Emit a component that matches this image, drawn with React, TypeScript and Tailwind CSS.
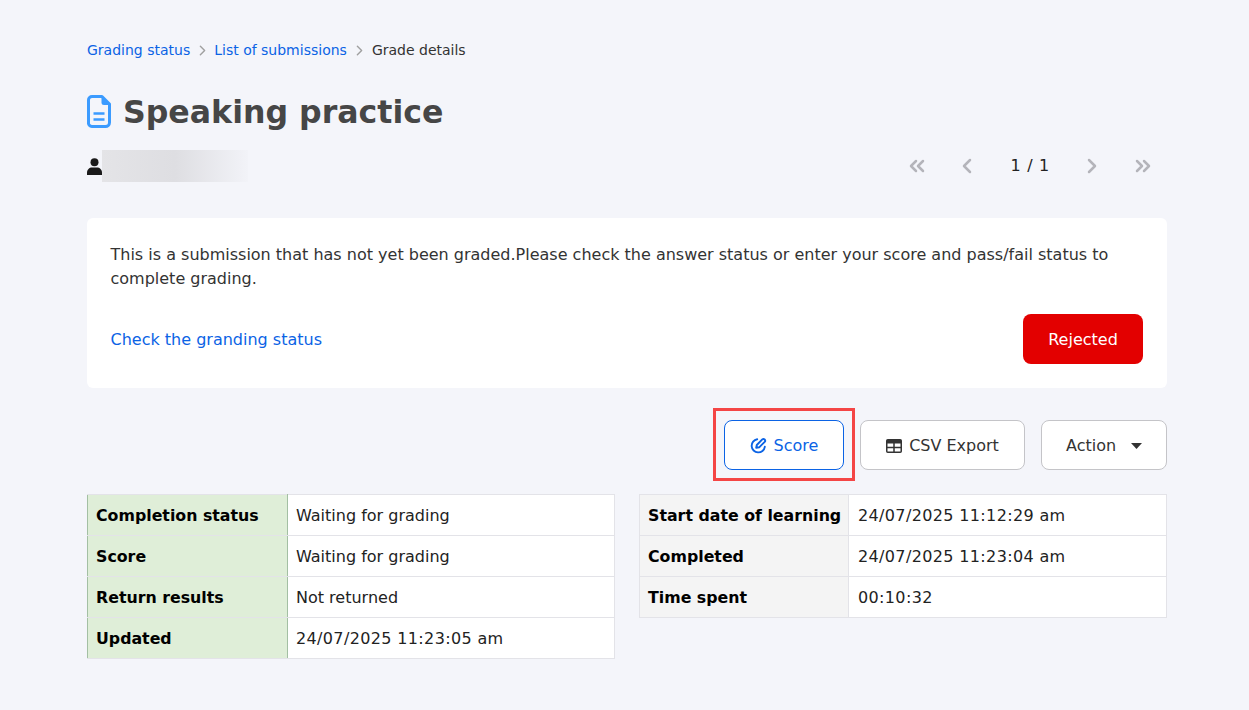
import { ChevronLeft, ChevronRight, ChevronsLeft, ChevronsRight } from "lucide-react";

const LEFT_ROWS = [
  ["Completion status", "Waiting for grading"],
  ["Score", "Waiting for grading"],
  ["Return results", "Not returned"],
  ["Updated", "24/07/2025 11:23:05 am"],
];

const RIGHT_ROWS = [
  ["Start date of learning", "24/07/2025 11:12:29 am"],
  ["Completed", "24/07/2025 11:23:04 am"],
  ["Time spent", "00:10:32"],
];

function FileIcon() {
  return (
    <svg width="24" height="33" viewBox="0 0 24 33" fill="none" className="shrink-0">
      <path d="M5 1.5h10L22.5 9v18.5a4 4 0 0 1-4 4H5a3.5 3.5 0 0 1-3.5-4V5A3.5 3.5 0 0 1 5 1.5Z" stroke="#3b9bff" strokeWidth="3" strokeLinejoin="round" />
      <path d="M14.5 1.5 23 10h-6a2.5 2.5 0 0 1-2.5-2.5Z" fill="#3b9bff" />
      <path d="M6.5 18.5h11M6.5 24.5h11" stroke="#3b9bff" strokeWidth="2.6" />
    </svg>
  );
}

function PersonIcon() {
  return (
    <svg width="15" height="17" viewBox="0 0 15 17" fill="#1a1a1a" className="shrink-0">
      <circle cx="7.5" cy="4.2" r="4" />
      <path d="M0 17v-2.2C0 11.6 2.4 9.6 5 9.6h5c2.6 0 5 2 5 5.2V17Z" />
    </svg>
  );
}

function ScoreIcon() {
  return (
    <svg width="17" height="17" viewBox="0 0 17 17" fill="none" stroke="#0b63e5" strokeWidth="1.9" strokeLinecap="round" className="shrink-0">
      <path d="M7.2 2.3A6.6 6.6 0 1 0 14.8 9.8" />
      <path d="M6.2 10.8 6.8 8 12.3 2.4a1.7 1.7 0 0 1 2.4 2.4L9.2 10.3Z" strokeLinejoin="round" />
    </svg>
  );
}

function TableIcon() {
  return (
    <svg width="16" height="14" viewBox="0 0 16 14" className="shrink-0">
      <rect x=".75" y=".75" width="14.5" height="12.5" rx="1" fill="none" stroke="#333" strokeWidth="1.5" />
      <path d="M1 1h14v3.5H1Z" fill="#333" />
      <path d="M1 8.6h14M8 4v9" stroke="#333" strokeWidth="1.5" />
    </svg>
  );
}

function InfoTable({ rows, headClass, headWidth, cellClass }: { rows: string[][]; headClass: string; headWidth: string; cellClass: string }) {
  return (
    <table className="w-[528px] table-fixed border-collapse bg-white text-[16px]">
      <tbody>
        {rows.map(([k, v]) => (
          <tr key={k} className="h-[41px]">
            <th className={`${headWidth} ${headClass} whitespace-nowrap border border-[#e3e3e8] pl-2 pt-[1px] text-left text-[15.8px] font-bold text-black`}>{k}</th>
            <td className={`${cellClass} ${/\d/.test(v) ? "tracking-[0.36px]" : ""} border border-[#e3e3e8] pt-[1px] text-[#222]`}>{v}</td>
          </tr>
        ))}
      </tbody>
    </table>
  );
}

export default function App() {
  return (
    <div className="min-h-[710px] bg-[#f4f5fa] pl-[87px] pr-[82px] pt-[41px] font-['DejaVu_Sans',sans-serif] text-[#333]">
      <nav className="flex h-[18px] items-center text-[14px] leading-[18px]">
        <a className="text-[#0b63e5]">Grading status</a>
        <ChevronRight size={17} className="mx-[3.5px] text-[#a0a0a0]" />
        <a className="text-[#0b63e5]">List of submissions</a>
        <ChevronRight size={17} className="mx-[4px] text-[#a0a0a0]" />
        <span>Grade details</span>
      </nav>

      <div className="mt-[32px] flex h-[40px] items-center gap-[12px]">
        <FileIcon />
        <h1 className="pt-[1px] text-[31.6px] font-bold leading-[40px] text-[#464646]">Speaking practice</h1>
      </div>

      <div className="mt-[19px] flex h-[32px] items-center justify-between">
        <div className="flex items-center">
          <PersonIcon />
          <div className="h-[32px] w-[146px] bg-gradient-to-r from-[#e4e4e7] via-[#dedee2] to-[#f2f3f8]" />
        </div>
        <div className="flex items-center text-[#b4b4ba]">
          <ChevronsLeft size={24} strokeWidth={2.5} className="mr-[26px]" />
          <ChevronLeft size={24} strokeWidth={2.5} className="mr-[32px]" />
          <span className="text-[16px] tracking-[0.7px] text-[#222]">1 / 1</span>
          <ChevronRight size={24} strokeWidth={2.5} className="ml-[30px]" />
          <ChevronsRight size={24} strokeWidth={2.5} className="ml-[27px] mr-[12px]" />
        </div>
      </div>

      <section className="mt-[36px] h-[170px] rounded-md bg-white pl-6 pr-6 pt-[25px] text-[16px]">
        <p className="-ml-[0.5px] leading-[24px] text-[#333]">
          This is a submission that has not yet been graded.Please check the answer status or enter your score and pass/fail status to complete grading.
        </p>
        <div className="mt-[23px] flex items-center justify-between">
          <a className="-ml-[0.5px] pt-[1px] text-[#0b63e5]">Check the granding status</a>
          <button className="h-[50px] w-[120px] rounded-lg bg-[#e30000] pt-[1px] text-white">Rejected</button>
        </div>
      </section>

      <div className="mt-[32px] flex justify-end gap-4 text-[16px]">
        <div className="relative">
          <button className="flex h-[50px] w-[120px] items-center justify-center gap-[7px] rounded-lg border border-[#0b63e5] bg-white pt-[1px] text-[#0b63e5]">
            <ScoreIcon />
            Score
          </button>
          <div className="absolute -left-[11px] -top-[12px] h-[73px] w-[142px] border-[3px] border-[#f44545]" />
        </div>
        <button className="flex h-[50px] w-[165px] items-center justify-center gap-[7px] rounded-lg border border-[#c4c4c8] bg-white pt-[1px] text-[#333]">
          <TableIcon />
          CSV Export
        </button>
        <button className="flex h-[50px] w-[126px] items-center gap-[15px] rounded-lg border border-[#c4c4c8] bg-white pl-[24px] pt-[1px] text-[#333]">
          Action
          <svg width="11" height="6" viewBox="0 0 11 6" fill="#333"><path d="M0 0h11L5.5 6Z" /></svg>
        </button>
      </div>

      <div className="mt-[24px] flex items-start justify-between">
        <InfoTable rows={LEFT_ROWS} headWidth="w-[200px]" headClass="bg-[#dfeed8] border-l-[#a3bfa3] border-r-[#a3bfa3]" cellClass="pl-2" />
        <InfoTable rows={RIGHT_ROWS} headWidth="w-[209px]" headClass="bg-[#f4f4f4]" cellClass="pl-[9px]" />
      </div>
    </div>
  );
}
